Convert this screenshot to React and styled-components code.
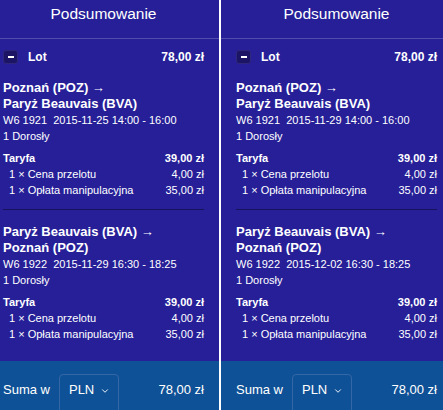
import React from 'react'
import styled, { createGlobalStyle } from 'styled-components'
import { ChevronDown } from 'lucide-react'

const GlobalStyle = createGlobalStyle`
  * {
    margin: 0;
    padding: 0;
    box-sizing: border-box;
  }
  body {
    background: #ffffff;
    overflow: hidden;
    font-family: "Liberation Sans", Arial, sans-serif;
    color: #ffffff;
  }
`

const Strip = styled.div`
  display: flex;
  gap: 2px;
  margin-left: -12px;
  height: 410px;
  background: #ffffff;
`

const Panel = styled.section`
  width: 231px;
  flex-shrink: 0;
  display: flex;
  flex-direction: column;
  background: #261f98;
`

const Header = styled.h2`
  height: 39px;
  padding-top: 5px;
  border-bottom: 1px solid #514dad;
  text-align: center;
  font-size: 15.5px;
  line-height: 18px;
  font-weight: normal;
`

const Body = styled.div`
  flex: 1;
  padding: 10px 15px 0;
`

const LotRow = styled.div`
  display: flex;
  align-items: center;
  height: 15px;
  font-size: 12px;
  font-weight: bold;
`

const Toggle = styled.span`
  width: 15px;
  height: 14px;
  margin-right: 10px;
  display: flex;
  align-items: center;
  justify-content: center;
  background: #1c1464;
  border: 1px solid #2f277c;
  border-radius: 3px;

  &::before {
    content: '';
    width: 6px;
    height: 2px;
    background: #ffffff;
  }
`

const Price = styled.span`
  margin-left: auto;
`

const Segment = styled.div`
  padding-top: ${p => (p.$first ? '16px' : '14px')};
  padding-bottom: 11px;
  border-bottom: ${p => (p.$last ? 'none' : '1px solid #17135a')};
`

const Route = styled.div`
  font-size: 13px;
  font-weight: bold;
  line-height: 16px;

  span {
    display: block;
  }
`

const Meta = styled.div`
  font-size: 11px;
  line-height: 16px;
  white-space: pre;
`

const Fares = styled.div`
  margin-top: 6px;
`

const FareRow = styled.div`
  display: flex;
  justify-content: space-between;
  font-size: 11px;
  line-height: 16px;
  font-weight: ${p => (p.$total ? 'bold' : 'normal')};
  padding-left: ${p => (p.$total ? '0' : '6px')};
`

const Footer = styled.div`
  height: 49px;
  padding: 13px 15px 0;
  display: flex;
  align-items: flex-start;
  background: #0f5196;
  font-size: 13px;
`

const FooterLabel = styled.span`
  line-height: 32px;
  margin-right: 9px;
`

const CurrencySelect = styled.div`
  height: 40px;
  padding: 0 8px 0 9px;
  display: flex;
  align-items: flex-start;
  gap: 6px;
  line-height: 30px;
  border: 1px solid #3467a6;
  border-radius: 4px;

  svg {
    margin-top: 11px;
  }
`

const Total = styled.span`
  margin-left: auto;
  line-height: 32px;
`

const summaries = [
  {
    segments: [
      { from: 'Poznań (POZ)', to: 'Paryż Beauvais (BVA)', flight: 'W6 1921', when: '2015-11-25 14:00 - 16:00' },
      { from: 'Paryż Beauvais (BVA)', to: 'Poznań (POZ)', flight: 'W6 1922', when: '2015-11-29 16:30 - 18:25' },
    ],
  },
  {
    segments: [
      { from: 'Poznań (POZ)', to: 'Paryż Beauvais (BVA)', flight: 'W6 1921', when: '2015-11-29 14:00 - 16:00' },
      { from: 'Paryż Beauvais (BVA)', to: 'Poznań (POZ)', flight: 'W6 1922', when: '2015-12-02 16:30 - 18:25' },
    ],
  },
]

function Summary({ segments }) {
  return (
    <Panel>
      <Header>Podsumowanie</Header>
      <Body>
        <LotRow>
          <Toggle />
          Lot
          <Price>78,00 zł</Price>
        </LotRow>
        {segments.map((s, i) => (
          <Segment key={i} $first={i === 0} $last={i === segments.length - 1}>
            <Route>
              <span>{s.from} →</span>
              <span>{s.to}</span>
            </Route>
            <Meta>{s.flight}  {s.when}</Meta>
            <Meta>1 Dorosły</Meta>
            <Fares>
              <FareRow $total>
                <span>Taryfa</span>
                <span>39,00 zł</span>
              </FareRow>
              <FareRow>
                <span>1 × Cena przelotu</span>
                <span>4,00 zł</span>
              </FareRow>
              <FareRow>
                <span>1 × Opłata manipulacyjna</span>
                <span>35,00 zł</span>
              </FareRow>
            </Fares>
          </Segment>
        ))}
      </Body>
      <Footer>
        <FooterLabel>Suma w</FooterLabel>
        <CurrencySelect>
          PLN
          <ChevronDown size={10} strokeWidth={2.2} />
        </CurrencySelect>
        <Total>78,00 zł</Total>
      </Footer>
    </Panel>
  )
}

export default function App() {
  return (
    <>
      <GlobalStyle />
      <Strip>
        {summaries.map((s, i) => (
          <Summary key={i} segments={s.segments} />
        ))}
      </Strip>
    </>
  )
}
